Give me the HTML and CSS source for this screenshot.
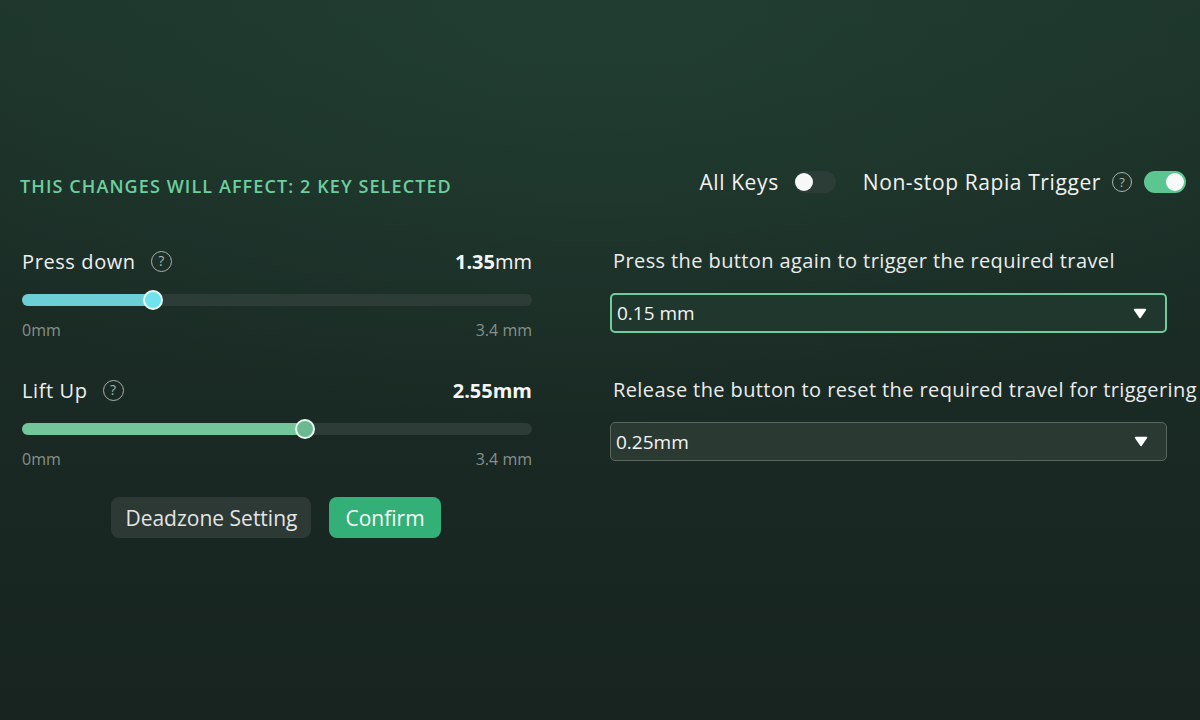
FILE: index.html
```html
<!DOCTYPE html>
<html lang="en">
<head>
    <meta charset="UTF-8">
    <meta name="viewport" content="width=device-width, initial-scale=1.0">
    <title>Rapid Trigger</title>
    <link rel="stylesheet" href="styles.css">
</head>
<body>

    <main class="panel">
        <div class="top-row">
            <h3 class="affect">This changes will affect: 2 key selected</h3>
            <div class="switches">
                <span class="switch-label">All Keys</span>
                <span class="toggle"><span class="knob"></span></span>
                <span class="switch-label nonstop">Non-stop Rapia Trigger</span>
                <span class="help">?</span>
                <span class="toggle on"><span class="knob"></span></span>
            </div>
        </div>

        <div class="columns">
            <section class="travel">
                <div class="field">
                    <div class="field-head">
                        <span class="label">Press down <span class="help big">?</span></span>
                        <span class="value"><b>1.35</b>mm</span>
                    </div>
                    <div class="slider press">
                        <div class="fill" style="width: 25.7%"></div>
                        <div class="thumb" style="left: 25.7%"></div>
                    </div>
                    <div class="range"><span>0mm</span><span>3.4 mm</span></div>
                </div>

                <div class="field">
                    <div class="field-head">
                        <span class="label">Lift Up <span class="help big">?</span></span>
                        <span class="value"><b>2.55mm</b></span>
                    </div>
                    <div class="slider lift">
                        <div class="fill" style="width: 55.5%"></div>
                        <div class="thumb" style="left: 55.5%"></div>
                    </div>
                    <div class="range"><span>0mm</span><span>3.4 mm</span></div>
                </div>

                <div class="actions">
                    <button class="btn ghost">Deadzone Setting</button>
                    <button class="btn primary">Confirm</button>
                </div>
            </section>

            <section class="options">
                <div class="option">
                    <p class="option-title">Press the button again to trigger the required travel</p>
                    <div class="dropdown active">
                        <span>0.15 mm</span>
                        <svg class="caret" width="14" height="11" viewBox="0 0 14 11"><path d="M1.5 1.5h11L7 9.5z" fill="#fff" stroke="#fff" stroke-width="1.5" stroke-linejoin="round"/></svg>
                    </div>
                </div>
                <div class="option">
                    <p class="option-title">Release the button to reset the required travel for triggering</p>
                    <div class="dropdown">
                        <span>0.25mm</span>
                        <svg class="caret" width="14" height="11" viewBox="0 0 14 11"><path d="M1.5 1.5h11L7 9.5z" fill="#fff" stroke="#fff" stroke-width="1.5" stroke-linejoin="round"/></svg>
                    </div>
                </div>
            </section>
        </div>
    </main>

</body>
</html>
```

FILE: styles.css
```css
/* painel de rapid trigger */
body { margin: 0; height: 720px; overflow: hidden; font-family: 'Open Sans', 'Liberation Sans', sans-serif; color: #ececec;
    background: radial-gradient(ellipse 900px 420px at 50% 0%, #213d31 0%, rgba(33,61,49,0) 100%), linear-gradient(180deg, #1d342a 0%, #1a2a24 50%, #172420 100%); }
.panel { padding: 166px 14px 0 20px; }

.top-row { display: flex; justify-content: space-between; align-items: center; height: 32px; }
.affect { margin: 0; font-size: 18px; font-weight: 600; text-transform: uppercase; color: #6dcf9d; letter-spacing: 1.1px; margin-top: 7px; }
.switches { display: flex; align-items: center; }
.switch-label { font-size: 21px; color: #f2f2f2; letter-spacing: 0.6px; }
.nonstop { margin-left: 27px; }
.help { display: inline-flex; align-items: center; justify-content: center; width: 18px; height: 18px; border: 1.5px solid #a9b3ae; border-radius: 50%; font-size: 13px; color: #a9b3ae; margin: 0 12px 0 11px; line-height: 1; letter-spacing: 0; }
.help.big { width: 19px; height: 19px; font-size: 14px; margin: 0 0 0 15px; vertical-align: 1px; }
.toggle { position: relative; width: 42px; height: 22px; border-radius: 11px; background: #2c3c36; margin-left: 15px; }
.toggle.on { background: #5cc690; margin-left: 0; }
.toggle .knob { position: absolute; top: 2px; left: 1px; width: 18px; height: 18px; border-radius: 50%; background: #f7f9f8; }
.toggle.on .knob { left: auto; right: 2px; }

.columns { display: grid; grid-template-columns: 510px 556px; column-gap: 79px; margin-top: 50px; padding-left: 2px; }

.field { height: 129px; }
.field-head { display: flex; justify-content: space-between; align-items: center; height: 26px; }
.label { font-size: 20px; color: #f0f0f0; display: inline-flex; align-items: center; letter-spacing: 0.6px; }
.value { font-size: 20px; color: #f5f5f5; }
.value b { font-weight: 700; }
.slider { position: relative; height: 12px; border-radius: 6px; background: #2d3c36; margin-top: 20px; }
.slider .fill { height: 100%; border-radius: 6px; }
.slider .thumb { position: absolute; top: 50%; width: 16px; height: 16px; margin: -10px 0 0 -10px; border-radius: 50%; border: 2px solid #e9f7f1; }
.press .fill { background: #6dcfd6; }
.press .thumb { background: #6fe2ee; }
.lift .fill { background: #72c699; }
.lift .thumb { background: #6bb990; }
.range { display: flex; justify-content: space-between; margin-top: 13px; font-size: 16px; color: #86918c; }

.actions { display: flex; justify-content: center; gap: 18px; margin-top: -9px; padding-right: 2px; }
.btn { height: 41px; padding: 0 14px; border: none; border-radius: 8px; font-family: inherit; font-size: 21px; cursor: pointer; }
.btn.ghost { background: #2c3934; color: #e4e4e4; }
.btn.primary { background: #33b077; color: #f4fbf7; padding: 0 16px; }

.options { margin-left: -1px; }
.option { height: 129px; }
.option-title { margin: 0; padding-left: 3px; height: 26px; line-height: 26px; font-size: 20px; color: #ececec; white-space: nowrap; letter-spacing: 0.4px; }
.dropdown { display: flex; justify-content: space-between; align-items: center; height: 37px; margin-top: 19px; padding: 0 18px 0 5px; border: 1.5px solid #59675f; border-radius: 5px; background: #2a3a33; font-size: 19px; color: #f5f5f5; }
.dropdown.active { border: 2px solid #6fcc9c; background: #1f372d; height: 36px; }
```
